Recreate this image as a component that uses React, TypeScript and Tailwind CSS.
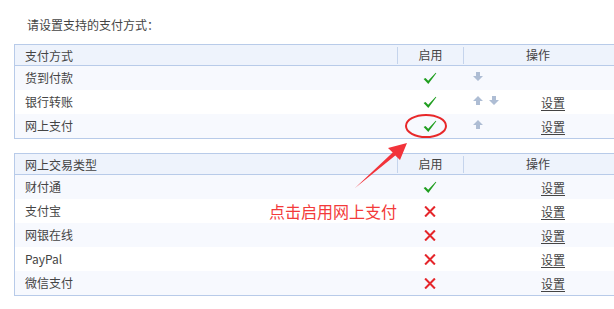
import React from "react";

const font = { fontFamily: '"Noto Sans CJK SC", "Microsoft YaHei", sans-serif' };

function Check() {
  return (
    <svg width="14" height="13" viewBox="0 0 14 13">
      <path d="M0.6 6.9 L2.5 5.9 L5.2 8.7 L12.7 0.7 L13.3 1.3 L5.3 12 Z" fill="#1f9e1f" />
    </svg>
  );
}

function Cross() {
  return (
    <svg width="12" height="11" viewBox="0 0 12 11">
      <path d="M1.8 1.2 L10.2 9.8 M10.2 1.2 L1.8 9.8" stroke="#e5262b" strokeWidth="2" strokeLinecap="square" />
    </svg>
  );
}

function ArrowUp() {
  return (
    <svg width="10" height="9" viewBox="0 0 10 9">
      <path d="M5 0 L10 5 L7 5 L7 9 L3 9 L3 5 L0 5 Z" fill="#aebdd4" />
    </svg>
  );
}

function ArrowDown() {
  return (
    <svg width="10" height="9" viewBox="0 0 10 9">
      <path d="M5 9 L10 4 L7 4 L7 0 L3 0 L3 4 L0 4 Z" fill="#aebdd4" />
    </svg>
  );
}

type Row = { name: string; on: boolean; up?: boolean; down?: boolean; set: boolean };

function Table({ title, rows }: { title: string; rows: Row[] }) {
  return (
    <div className="ml-[14px] w-[601px] border border-[#b8cbe9] text-[12px] text-[#444]">
      <div className="flex h-[21px] items-center bg-[#eef3fc] border-b border-[#b8cbe9]">
        <div className="w-[382px] pl-[10px] leading-[21px]">{title}</div>
        <div className="w-[66px] h-[17px] border-l border-[#c5d4ec] flex items-center justify-center">启用</div>
        <div className="flex-1 h-[17px] border-l border-[#c5d4ec] flex items-center justify-center pr-[2px]">操作</div>
      </div>
      {rows.map((r, i) => (
        <div key={i} className={`flex h-[24px] items-center ${i % 2 === 0 ? "bg-[#f7f9fe]" : "bg-white"}`}>
          <div className="w-[382px] pl-[10px]">{r.name}</div>
          <div className="w-[66px] flex items-center justify-center">{r.on ? <Check /> : <Cross />}</div>
          <div className="flex-1 flex items-center pl-[10px]">
            <div className="w-[68px] flex items-center gap-[6px] -mt-[4px]">
              {r.up && <ArrowUp />}
              {r.down && <ArrowDown />}
            </div>
            {r.set && <span className="underline underline-offset-2 mt-[2px]">设置</span>}
          </div>
        </div>
      ))}
    </div>
  );
}

export default function App() {
  return (
    <div className="relative w-[614px] h-[309px] overflow-hidden bg-white" style={font}>
      <div className="pt-[17px]">
        <div className="pl-[27px] text-[12px] leading-[16px] text-[#444]">请设置支持的支付方式：</div>
        <div className="mt-[11px]">
          <Table
            title="支付方式"
            rows={[
              { name: "货到付款", on: true, down: true, set: false },
              { name: "银行转账", on: true, up: true, down: true, set: true },
              { name: "网上支付", on: true, up: true, set: true },
            ]}
          />
        </div>
        <div className="mt-[14px]">
          <Table
            title="网上交易类型"
            rows={[
              { name: "财付通", on: true, set: true },
              { name: "支付宝", on: false, set: true },
              { name: "网银在线", on: false, set: true },
              { name: "PayPal", on: false, set: true },
              { name: "微信支付", on: false, set: true },
            ]}
          />
        </div>
      </div>
      <svg className="absolute left-0 top-0 pointer-events-none" width="614" height="309" viewBox="0 0 614 309">
        <ellipse cx="426" cy="126" rx="20" ry="11" fill="none" stroke="#e8282a" strokeWidth="2" />
        <polygon points="355,188 392.7,152.5 388,148 407,143 400,160 395.3,155.5" fill="#f2333a" />
      </svg>
      <div className="absolute left-[269px] top-[200px] text-[16px] leading-[22px] text-[#f33a3a]">点击启用网上支付</div>
    </div>
  );
}
